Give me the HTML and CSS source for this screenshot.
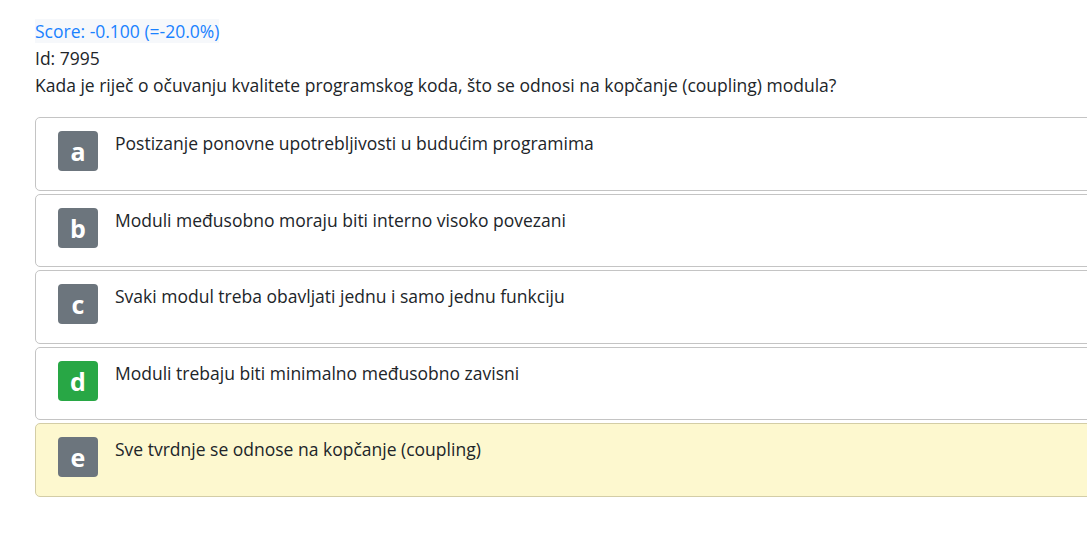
FILE: index.html
```html
<!DOCTYPE html>
<html lang="hr">
<head>
    <meta charset="UTF-8">
    <meta name="viewport" content="width=device-width, initial-scale=1.0">
    <title>Pitanje 7995</title>
    <link rel="stylesheet" href="styles.css">
</head>
<body>

<div class="question">
    <div class="score"><span class="score-value">Score: -0.100 (=-20.0%)</span></div>
    <div class="qid">Id: 7995</div>
    <div class="qtext">Kada je riječ o očuvanju kvalitete programskog koda, što se odnosi na kopčanje (coupling) modula?</div>

    <div class="answers">
        <div class="answer">
            <span class="badge">a</span>
            <span class="answer-text">Postizanje ponovne upotrebljivosti u budućim programima</span>
        </div>
        <div class="answer">
            <span class="badge">b</span>
            <span class="answer-text">Moduli međusobno moraju biti interno visoko povezani</span>
        </div>
        <div class="answer">
            <span class="badge">c</span>
            <span class="answer-text">Svaki modul treba obavljati jednu i samo jednu funkciju</span>
        </div>
        <div class="answer">
            <span class="badge correct">d</span>
            <span class="answer-text">Moduli trebaju biti minimalno međusobno zavisni</span>
        </div>
        <div class="answer selected">
            <span class="badge">e</span>
            <span class="answer-text">Sve tvrdnje se odnose na kopčanje (coupling)</span>
        </div>
    </div>
</div>

</body>
</html>
```

FILE: styles.css
```css
body {
    font-family: "Open Sans", "Noto Sans", sans-serif;
    font-size: 17.5px;
    line-height: 27px;
    color: #212529;
    background-color: white;
    margin: 0;
    overflow: hidden;
}
.question {
    padding: 18px 0 0 35px;
    width: 1100px;
}
.score-value {
    color: #1a82ff;
    background-color: #f6f8fb;
}
.answers {
    margin-top: 18px;
}
.answer {
    display: flex;
    align-items: flex-start;
    gap: 17px;
    padding: 12px 22px 18.5px 22px;
    margin-bottom: 3px;
    border: 1px solid #c4c4c4;
    border-radius: 5px;
    background-color: white;
}
.answer.selected {
    background-color: #fdf8cf;
    border-color: #d3cda6;
}
.badge {
    flex: none;
    width: 40px;
    height: 40px;
    margin-top: 1px;
    border-radius: 4px;
    background-color: #6c757d;
    color: white;
    font-size: 25px;
    font-weight: bold;
    line-height: 40px;
    text-align: center;
}
.badge.correct {
    background-color: #28a745;
}
```
